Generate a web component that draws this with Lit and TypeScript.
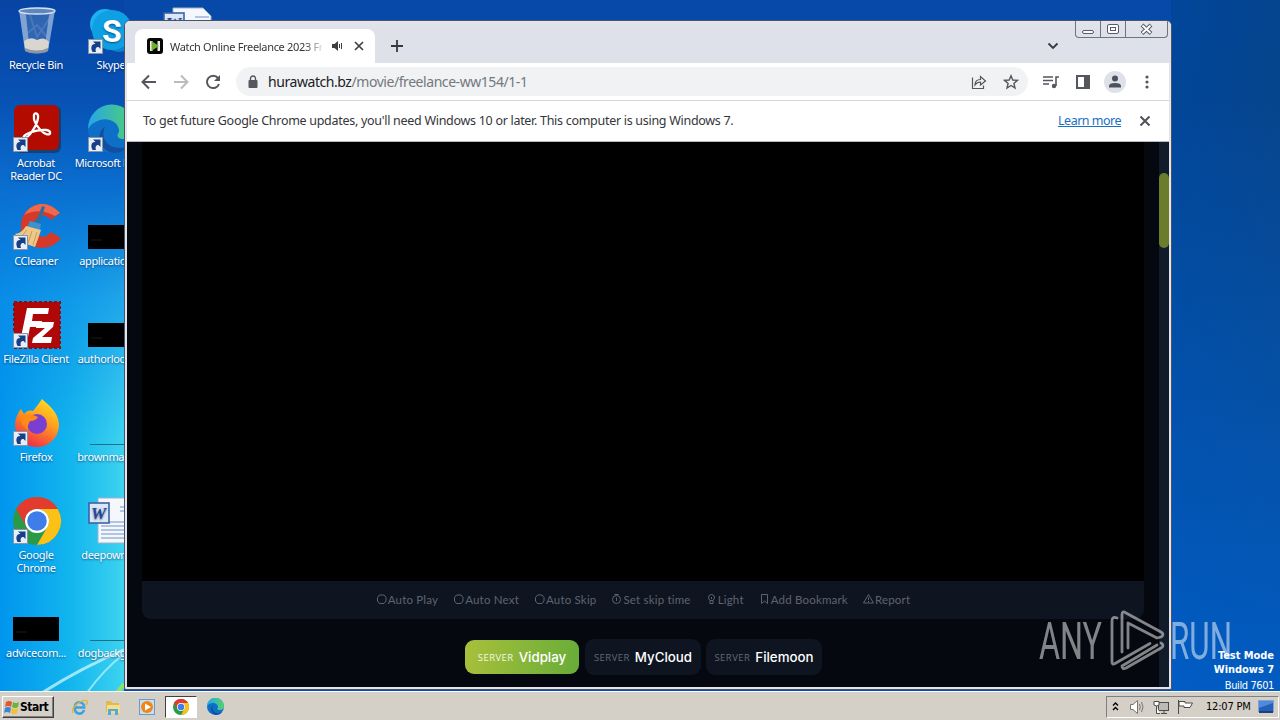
import { LitElement, css, html, svg } from 'lit'
import { customElement, property } from 'lit/decorators.js'
import { classMap } from 'lit/directives/class-map.js'

const glyphs: Record<string, unknown> = {
  bin: svg`
    <path d="M6 3 L42 3 L35 44 Q24 50 12 44Z" fill="#3f6fb4" opacity=".75"/>
    <path d="M6 3 L13 8 L17 46 L12 44Z" fill="#b9cfe8" opacity=".6"/>
    <path d="M42 3 L36 8 L31 46 L35 44Z" fill="#90b0dc" opacity=".8"/>
    <path d="M17 8 L24 30 L36 12 M15 26 L24 18 L34 30" stroke="#a9c4e8" stroke-width="2" fill="none" opacity=".2"/>
    <path d="M11 34 Q18 29 24 33 Q31 29 36 35 L35 42 Q24 48 12 42Z" fill="#d9d5cf"/>
    <path d="M12 41 Q24 46 35 41 L35 44 Q24 49 12 44Z" fill="#8e96a2"/>
    <ellipse cx="24" cy="4" rx="18" ry="3" fill="#5f87bd" stroke="#d5e2f1" stroke-width="1.3"/>`,
  skype: svg`
    <circle cx="17" cy="17" r="15" fill="#1bb2ee"/>
    <circle cx="31" cy="30" r="15" fill="#0a83cf"/>
    <circle cx="24" cy="23" r="20" fill="#0fa0e3"/>
    <text x="14" y="35" font-family="Roboto" font-weight="700" font-size="32" fill="#fff">S</text>`,
  acrobat: svg`
    <rect x="2" y="1" width="46" height="47" rx="6" fill="#222" opacity=".5"/>
    <rect x="1" y="0" width="45" height="45" rx="6" fill="#b30b00"/>
    <path d="M21 12 C20 7 26 7 25 13 C24 21 15 34 11 33 C8 30 23 24 33 25 C39 26 38 31 33 29 C28 27 20 17 21 12Z" fill="none" stroke="#fff" stroke-width="2.3"/>`,
  edge: svg`
    <defs><linearGradient id="e1" x1="0" x2="1"><stop offset="0" stop-color="#26a5e8"/><stop offset="1" stop-color="#53d36c"/></linearGradient></defs>
    <circle cx="24" cy="24" r="24" fill="#0d6fc8"/>
    <path d="M0 24 A24 24 0 0 1 48 23 C48 31 42 34 35 34 C28 34 29 29 31 27 C32 18 21 12 12 15 C6 17 2 20 0 24Z" fill="url(#e1)"/>
    <path d="M17 22 C12 32 19 43 32 43 Q38 43 43 39 Q37 48 25 48 C10 45 8 26 17 22Z" fill="#124f9e"/>`,
  ccleaner: svg`
    <path d="M47 10 Q38 0 27 1 A22 22 0 0 0 8 20 L8 30 A22 22 0 0 0 30 45 Q42 44 48 35 L38 29 Q33 35 27 33 Q21 30 21 23 Q21 15 28 13 Q34 12 38 17Z" fill="#d5392a"/>
    <path d="M47 10 Q38 0 27 1 Q16 3 11 12 Q26 4 42 13Z" fill="#ee6a4e"/>
    <path d="M29 3 L32 4 L27 20 L23 19Z" fill="#2d6f9e"/>
    <path d="M17 18 L28 21 L27 27 L14 24Z" fill="#3c93cc"/>
    <path d="M13 23 L28 27 Q25 36 22 44 Q12 42 2 31 Q9 30 13 23Z" fill="#efc888"/>
    <path d="M14 27 L8 34 M19 28 L15 40 M24 29 L20 42" stroke="#c99a55" stroke-width="1"/>`,
  filezilla: svg`
    <rect x="1" y="1" width="46" height="46" fill="#b00808" stroke="#8d1010" stroke-width="2" stroke-dasharray="3 2"/>
    <path d="M14 7 H36 L35 13 H20 L19 20 H29 L28 26 H17 L14 41 H7Z M24 21 H41 L40 26 L29 36 H39 L38 42 H19 L20 37 L32 27 H23Z" fill="#fff"/>`,
  firefox: svg`
    <defs><linearGradient id="f1" x1=".8" y1="0" x2=".3" y2="1"><stop offset="0" stop-color="#ffe226"/><stop offset=".45" stop-color="#ff9a1f"/><stop offset="1" stop-color="#f0274c"/></linearGradient></defs>
    <path d="M29 0 C35 6 45 12 46 25 A22 22 0 0 1 2 27 C2 19 5 14 8 10 L11 15 Q15 10 20 12 Q25 6 29 0Z" fill="url(#f1)"/>
    <circle cx="24" cy="25" r="10" fill="#7a3fd0"/>
    <path d="M7 18 Q17 13 25 18 Q23 22 17 22 Q14 27 15 31 Q8 27 7 18Z" fill="#ff8a16"/>`,
  chrome: svg`
    <circle cx="24" cy="24" r="24" fill="#2b9a48"/>
    <path d="M3.2 12 A24 24 0 0 1 44.8 12 H24 A12 12 0 0 0 13.6 30Z" fill="#e33b2e"/>
    <path d="M44.8 12 A24 24 0 0 1 24 48 L34.4 30 A12 12 0 0 0 24 12Z" fill="#fbc116"/>
    <circle cx="24" cy="24" r="12" fill="#fff"/>
    <circle cx="24" cy="24" r="9.8" fill="#3f7de8"/>`,
  black: svg`
    <rect x="0" y="22" width="46" height="24" fill="#000"/><path d="M3 37 H14" stroke="#1a1a1a"/>`,
  line: svg`<path d="M2 45.5 H48" stroke="#1c6f86" stroke-width="1.2"/>`,
  word: svg`
    <path d="M10 1 H40 L48 9 V46 H10Z" fill="#f4f7fc" stroke="#9db1cc"/>
    <path d="M32 10 H46 M32 14 H46 M13 25 H46 M13 29 H46 M13 33 H46 M13 37 H46 M13 41 H46" stroke="#6f92c9" stroke-width="1"/>
    <rect x="1" y="6" width="20" height="20" fill="#dbe6f6" stroke="#3c62a5" stroke-width="1.6"/>
    <text x="3" y="22" font-family="Liberation Serif" font-style="italic" font-weight="700" font-size="17" fill="#254a93">W</text>`,
}

interface Shortcut {
  icon: string
  label: string
  arrow?: boolean
}

const shortcuts: Shortcut[] = [
  { icon: 'bin', label: 'Recycle Bin' },
  { icon: 'acrobat', label: 'Acrobat Reader DC', arrow: true },
  { icon: 'ccleaner', label: 'CCleaner', arrow: true },
  { icon: 'filezilla', label: 'FileZilla Client', arrow: true },
  { icon: 'firefox', label: 'Firefox', arrow: true },
  { icon: 'chrome', label: 'Google Chrome', arrow: true },
  { icon: 'black', label: 'advicecom...' },
  { icon: 'skype', label: 'Skype', arrow: true },
  { icon: 'edge', label: 'Microsoft Edge', arrow: true },
  { icon: 'black', label: 'applicationr...' },
  { icon: 'black', label: 'authorlocati...' },
  { icon: 'line', label: 'brownmagn...' },
  { icon: 'word', label: 'deepown.rtf' },
  { icon: 'line', label: 'dogbackgro...' },
  { icon: 'word', label: '' },
]

@customElement('desktop-icon')
export class DesktopIcon extends LitElement {
  @property() icon = ''
  @property() label = ''
  @property({ type: Boolean }) arrow = false

  static styles = css`
    :host {
      display: flex;
      flex-direction: column;
      align-items: center;
      width: 74px;
      height: 98px;
      color: #fff;
      font: 11px/13px 'Noto Sans', sans-serif;
      letter-spacing: -0.34px;
      text-align: center;
      text-shadow: 0 1px 2px rgba(0, 20, 70, 0.6);
    }
    .icon {
      width: 48px;
      height: 48px;
      margin: 0 0 3px 2px;
      overflow: visible;
    }
    .label {
      width: 66px;
      white-space: normal;
    }
    .wide {
      white-space: nowrap;
      width: auto;
    }
  `

  render() {
    const wide = !this.label.startsWith('Acrobat') && !this.label.startsWith('Google')
    return html`
      <svg class="icon" viewBox="0 0 48 48">
        ${glyphs[this.icon]}
        ${this.arrow
          ? svg`
            <rect x="0.5" y="32.5" width="14" height="14" fill="#e8eef6" stroke="#8795a8"/>
            <path d="M4.500 45 C2 40 4 36.500 7.500 37 L5 34.500 H12.500 V42 L10.500 40 C8 39.500 7 42 8 45Z" fill="#173f87"/>`
          : ''}
      </svg>
      <div class=${classMap({ label: true, wide })}>${this.label}</div>
    `
  }
}

@customElement('chrome-window')
export class ChromeWindow extends LitElement {
  static styles = css`
    :host {
      display: flex;
      flex-direction: column;
      box-sizing: border-box;
      border: 1px solid #44566e;
      border-radius: 6px 6px 2px 2px;
      background: #e4e4ea;
      padding: 0 2px 2px;
      overflow: hidden;
      font-family: 'Noto Sans', sans-serif;
      color: #35363a;
    }
    svg {
      display: block;
      flex: none;
    }
    .strip {
      display: flex;
      height: 42px;
      background: linear-gradient(#e5e3ea, #dee1e9 8px);
      margin: 0 -2px;
      padding-left: 10px;
    }
    .tab {
      display: flex;
      align-items: center;
      box-sizing: border-box;
      width: 240px;
      height: 34px;
      margin-top: 8px;
      padding: 0 11px 0 12px;
      background: #fff;
      border-radius: 8px 8px 0 0;
      font-size: 11px;
    }
    .tab-title {
      width: 153px;
      margin: 0 8px 0 7px;
      overflow: hidden;
      white-space: nowrap;
      letter-spacing: -0.33px;
      mask-image: linear-gradient(90deg, #000 135px, transparent 155px);
    }
    .close {
      margin-left: 10px;
    }
    .plus {
      margin: 18px 0 0 15px;
    }
    .spacer {
      flex: 1;
    }
    .chevron {
      margin: 20px 16px 0 0;
    }
    .buttons {
      display: flex;
      height: 16px;
      margin-right: 3px;
      border: 1px solid #6d7480;
      border-top: 0;
      border-radius: 0 0 4px 4px;
    }
    .toolbar {
      display: flex;
      align-items: center;
      height: 37px;
      background: #fff;
      border-bottom: 1px solid #d5d7da;
      padding: 0 13px 0 14px;
    }
    .nav {
      margin-right: 16px;
    }
    .omnibox {
      display: flex;
      align-items: center;
      box-sizing: border-box;
      width: 792px;
      height: 29px;
      margin: 0 15px 0 -1px;
      padding: 0 9px 0 11px;
      border-radius: 15px;
      background: #f0f2f4;
      font-size: 14px;
    }
    .url {
      flex: 1;
      margin-left: 9px;
      color: #74787d;
      white-space: nowrap;
      letter-spacing: -0.44px;
    }
    .host {
      color: #202124;
    }
    .share {
      margin-right: 16px;
    }
    .tools {
      display: flex;
      align-items: center;
      gap: 16px;
    }
    .avatar {
      margin: 0 -4px;
    }
    .infobar {
      display: flex;
      align-items: center;
      box-sizing: border-box;
      height: 41px;
      padding: 0 18px 1px 16px;
      background: #fff;
      border-bottom: 1px solid #b8babd;
      font-size: 12.5px;
      letter-spacing: -0.29px;
      white-space: nowrap;
    }
    .learn {
      margin-left: auto;
      margin-right: 18px;
      color: #1a6fc4;
      letter-spacing: -0.5px;
      text-decoration: underline;
    }
    .page {
      display: flex;
      flex: 1;
      min-height: 0;
      background: #05080f;
    }
    .main {
      flex: 1;
      padding: 0 15px;
    }
    .video {
      height: 439px;
      background: #000;
    }
    .controls {
      display: flex;
      justify-content: center;
      align-items: center;
      gap: 15px;
      box-sizing: border-box;
      height: 38px;
      padding-bottom: 2px;
      background: #0e1521;
      border-radius: 0 0 9px 9px;
      color: #5e646e;
      font: 11.5px Lato, sans-serif;
      letter-spacing: 0.19px;
    }
    .control {
      display: flex;
      align-items: center;
      gap: 1px;
      white-space: nowrap;
    }
    .servers {
      display: flex;
      justify-content: center;
      align-items: center;
      gap: 5px;
      margin-top: 20px;
      padding-left: 1px;
    }
    .server {
      display: flex;
      align-items: center;
      justify-content: center;
      gap: 5px;
      width: 116px;
      height: 36px;
      border-radius: 9px;
      background: #0e1521;
      color: #fff;
      font: 500 13.3px Inter, sans-serif;
    }
    .server small {
      font: 9.5px 'Open Sans', sans-serif;
      letter-spacing: 0.45px;
      color: #636973;
    }
    .active {
      width: 114px;
      height: 34px;
      margin-right: 1px;
      background: linear-gradient(100deg, #a9c03b, #67ac38);
    }
    .active small {
      color: #f2f6e4;
    }
    .track {
      width: 10px;
      background: #111b29;
    }
    .thumb {
      height: 75px;
      margin-top: 31px;
      border-radius: 5px;
      background: #6b7d2a;
    }
  `

  ring = svg`<path d="M3.5 2 H8 L10 4.500 V8 L8 10.500 H3.5 L1.5 8 V4.500Z"/>`

  controls = [
    { text: 'Auto Play', icon: this.ring },
    { text: 'Auto Next', icon: this.ring },
    { text: 'Auto Skip', icon: this.ring },
    { text: 'Set skip time', icon: svg`<circle cx="5.5" cy="6.5" r="4"/><path d="M3.5 1.500 H7.5 M5.5 4.5 V8"/>` },
    { text: 'Light', icon: svg`<path d="M4 7.5 Q2.500 6 2.500 4 Q3 1.500 5.5 1.500 Q8 1.500 8.500 4 Q8.500 6 7 7.500 V10.500 H4Z M4 7.500 H7 M5.500 4 V6"/>` },
    { text: 'Add Bookmark', icon: svg`<path d="M2.500 1.500 H8.500 V10.500 L5.500 8 L2.500 10.500Z"/>` },
    { text: 'Report', icon: svg`<path d="M5.500 1.500 L10.500 10 H.5Z M5.500 4.500 V7 M5.500 8 V9"/>` },
  ]

  servers = ['Vidplay', 'MyCloud', 'Filemoon']

  renderStrip() {
    return html`
      <div class="strip">
        <div class="tab">
          <svg width="16" height="16">
            <rect width="16" height="16" rx="3" fill="#050805"/>
            <path d="M3 3 H5.500 V13 H3Z M10.500 3 H13 V13 H10.500Z" fill="#e9efe4"/>
            <path d="M4.500 3 L12 8 L4.500 13Z" fill="#72ad31"/>
          </svg>
          <div class="tab-title">Watch Online Freelance 2023 Free</div>
          <svg width="14" height="12" fill="#3c4043">
            <path d="M2 4 H4.500 L8 1 V11 L4.500 8 H2Z"/>
            <path d="M9.500 4 V8 M11.500 3 V9" stroke="#3c4043"/>
          </svg>
          <svg class="close" width="10" height="10" stroke="#3c4043" stroke-width="1.700"><path d="M1 1 L9 9 M9 1 L1 9"/></svg>
        </div>
        <svg class="plus" width="14" height="14" stroke="#35383c" stroke-width="1.800"><path d="M7 1 V13 M1 7 H13"/></svg>
        <div class="spacer"></div>
        <svg class="chevron" width="12" height="10" fill="none" stroke="#35383c" stroke-width="1.800"><path d="M1.500 2.500 L6 7 L10.500 2.500"/></svg>
        <div class="buttons">
          <svg width="91" height="16" fill="none" stroke="#555c68">
            <path d="M24.500 0 V16 M49.500 0 V16" stroke="#6d7480"/>
            <rect x="6.500" y="9.500" width="11" height="3" rx="1.500" fill="#fff"/>
            <rect x="31.500" y="3.500" width="11" height="9" rx="1.500" fill="#fff"/>
            <rect x="34.500" y="6.500" width="5" height="3"/>
            <path d="M66 4 L75 12.500 M75 4 L66 12.500" stroke-width="4"/>
            <path d="M66.500 4.500 L74.500 12 M74.500 4.500 L66.500 12" stroke="#fff" stroke-width="2"/>
          </svg>
        </div>
      </div>
    `
  }

  renderToolbar() {
    return html`
      <div class="toolbar">
        <svg class="nav" width="16" height="16" fill="none" stroke="#54575c" stroke-width="2"><path d="M15 8 H2 M8 1.500 L1.500 8 L8 14.500"/></svg>
        <svg class="nav" width="16" height="16" fill="none" stroke="#b9bbbe" stroke-width="2"><path d="M1 8 H14 M8 1.500 L14.500 8 L8 14.500"/></svg>
        <svg class="nav" width="16" height="16" fill="none" stroke="#54575c" stroke-width="2">
          <path d="M13 4 A6.200 6.200 0 1 0 14 10"/><path d="M15 1 V7 H9Z" fill="#54575c" stroke="none"/>
        </svg>
        <div class="omnibox">
          <svg width="12" height="14"><rect x="1.500" y="5" width="9" height="8" rx="1" fill="#54575c"/><path d="M3.500 5 V3.500 A2.500 2.500 0 0 1 8.500 3.500 V5" fill="none" stroke="#54575c" stroke-width="1.400"/></svg>
          <div class="url"><span class="host">hurawatch.bz</span>/movie/freelance-ww154/1-1</div>
          <svg class="share" width="16" height="16" fill="none" stroke="#54575c" stroke-width="1.200">
            <path d="M1.500 3.500 V14.500 H12.500 V11.500"/><path d="M4 11 Q4 5.500 9.500 5.500 V2.500 L14.500 7 L9.500 11 V8 Q6 8 4 11Z"/>
          </svg>
          <svg width="16" height="16" fill="none" stroke="#54575c" stroke-width="1.400"><path d="M8 1.800 L9.800 6 L14.400 6.400 L10.900 9.400 L12 14 L8 11.500 L4 14 L5.100 9.400 L1.600 6.400 L6.200 6Z"/></svg>
        </div>
        <div class="tools">
          <svg width="16" height="14" fill="none" stroke="#54575c" stroke-width="1.600">
            <path d="M0 2 H10 M0 5.500 H10 M0 9 H6 M13 11 V2 H16"/><circle cx="11" cy="11" r="2.200" fill="#54575c" stroke="none"/>
          </svg>
          <svg width="16" height="14"><rect x="2" y="1" width="12" height="12" fill="none" stroke="#54575c" stroke-width="2"/><rect x="9" y="1" width="5" height="12" fill="#54575c"/></svg>
          <svg class="avatar" width="24" height="24" fill="#4a5261">
            <circle cx="12" cy="12" r="11" fill="#dee1e8"/><circle cx="12" cy="8.500" r="3"/><path d="M6 17.500 V16 Q6 13 12 13 Q18 13 18 16 V17.500Z"/>
          </svg>
          <svg width="16" height="16" fill="#54575c"><circle cx="8" cy="3" r="1.600"/><circle cx="8" cy="8" r="1.600"/><circle cx="8" cy="13" r="1.600"/></svg>
        </div>
      </div>
    `
  }

  render() {
    return html`
      ${this.renderStrip()}
      ${this.renderToolbar()}
      <div class="infobar">
        <span>To get future Google Chrome updates, you'll need Windows 10 or later. This computer is using Windows 7.</span>
        <span class="learn">Learn more</span>
        <svg width="12" height="12" stroke="#505357" stroke-width="2"><path d="M1.500 1.500 L10.500 10.500 M10.500 1.500 L1.500 10.500"/></svg>
      </div>
      <div class="page">
        <div class="main">
          <div class="video"></div>
          <div class="controls">
            ${this.controls.map(
              (c) => html`
                <div class="control">
                  <svg width="11" height="12" fill="none" stroke="#5e646e">${c.icon}</svg>
                  <span>${c.text}</span>
                </div>
              `
            )}
          </div>
          <div class="servers">
            ${this.servers.map(
              (name, i) => html`
                <div class=${classMap({ server: true, active: i === 0 })}><small>SERVER</small>${name}</div>
              `
            )}
          </div>
        </div>
        <div class="track"><div class="thumb"></div></div>
      </div>
    `
  }
}

@customElement('task-bar')
export class TaskBar extends LitElement {
  static styles = css`
    :host {
      display: flex;
      align-items: center;
      box-sizing: border-box;
      background: #d4d0c8;
      border-top: 1px solid #fff;
      padding: 1px 1px 0 2px;
      font: 11px 'DejaVu Sans Condensed', 'DejaVu Sans', sans-serif;
      color: #000;
    }
    svg {
      display: block;
      flex: none;
    }
    .start {
      display: flex;
      align-items: center;
      box-sizing: border-box;
      width: 52px;
      height: 22px;
      padding-left: 1px;
      border: 1px solid;
      border-color: #fff #404040 #404040 #fff;
      box-shadow: inset -1px -1px #808080;
      font-size: 12px;
      font-weight: 700;
      letter-spacing: -0.5px;
    }
    .apps {
      display: flex;
      align-items: center;
      margin-left: 9px;
      gap: 2px;
    }
    .app {
      display: flex;
      align-items: center;
      justify-content: center;
      box-sizing: border-box;
      width: 32px;
      height: 22px;
    }
    .pressed {
      background: #fff;
      border: 1px solid;
      border-color: #404040 #fff #fff #404040;
    }
    .tray {
      display: flex;
      align-items: center;
      gap: 7px;
      box-sizing: border-box;
      width: 173px;
      height: 22px;
      margin-left: auto;
      padding: 0 1px 0 5px;
      border: 1px solid;
      border-color: #808080 #fff #fff #808080;
    }
    .sound {
      margin-left: 2px;
    }
    .time {
      margin: 0 0 0 5px;
      white-space: nowrap;
      letter-spacing: -0.2px;
    }
  `

  render() {
    return html`
      <div class="start">
        <svg width="16" height="16">
          <path d="M2 3 Q5 1 8 3 L7 8 Q4 6 1 8Z" fill="#e4572a"/><path d="M9 3 Q12 5 15 3 L14 8 Q11 10 8 8Z" fill="#6db33f"/>
          <path d="M1 9 Q4 7 7 9 L6 14 Q3 12 0 14Z" fill="#3b85d6"/><path d="M8 9 Q11 11 14 9 L13 14 Q10 16 7 14Z" fill="#f6c02c"/>
        </svg>
        Start
      </div>
      <div class="apps">
        <div class="app">
          <svg width="17" height="16" fill="none"><path d="M14.500 8.500 H4 A4.500 4.500 0 0 1 13 7 M4 9 A4.500 4.500 0 0 0 13 11" stroke="#3ba3e0" stroke-width="2.600"/><path d="M2 14 Q0 10 6 5 Q13 0 16 2 Q17 3 15 6" stroke="#e2b437" stroke-width="1.400"/></svg>
        </div>
        <div class="app">
          <svg width="16" height="16"><path d="M1 2 H6 L7 4 H14 V13 H1Z" fill="#e3b84c"/><path d="M2 6 H15 V14 H2Z" fill="#f5dd8c"/><path d="M3 16 V10 H13 V16 H10 V12 H6 V16Z" fill="#56aad6"/></svg>
        </div>
        <div class="app">
          <svg width="16" height="16"><rect x=".5" y=".5" width="15" height="15" fill="#c9dff1" stroke="#6a9cc8"/><circle cx="8" cy="8" r="6" fill="#f08519"/><path d="M6 4.500 L12 8 L6 11.500Z" fill="#fff"/></svg>
        </div>
        <div class="app pressed"><svg width="16" height="16" viewBox="0 0 48 48">${glyphs.chrome}</svg></div>
        <div class="app"><svg width="17" height="17" viewBox="0 0 48 48">${glyphs.edge}</svg></div>
      </div>
      <div class="tray">
        <svg width="8" height="11" fill="none" stroke="#000" stroke-width="1.400"><path d="M1 4.500 L3.500 2 L6 4.500 M1 9 L3.500 6.500 L6 9"/></svg>
        <svg class="sound" width="17" height="16" fill="none" stroke="#77756f"><path d="M1.500 5.500 H4 L8.500 1.500 V14.500 L4 10.500 H1.500Z" fill="#fff"/><path d="M10.500 5 Q12 8 10.500 11 M12.500 3 Q15.500 8 12.500 13"/></svg>
        <svg width="17" height="16" fill="none" stroke="#4c4b48"><rect x="5.500" y="3.500" width="10" height="8" fill="#bcbab4"/><path d="M8 14.500 H14 M11 12 V14"/><path d="M1 2.500 H6 V6 Q3.500 8 1 6Z M3.500 7 V14.500 H7" fill="#fff"/></svg>
        <svg width="17" height="16" fill="#fff" stroke="#4c4b48"><path d="M1.500 1 V15"/><path d="M2 2.500 H8 V4 H15.500 L13 8.500 H7 V7 H2Z"/></svg>
        <span class="time">12:07 PM</span>
        <svg width="16" height="14"><rect x=".5" y=".5" width="15" height="11" fill="#2560b6" stroke="#7fa3d2"/><path d="M1 8 L15 3 V1 H1Z" fill="#4f8ade"/><rect x="1" y="11" width="14" height="2" fill="#1c3f80"/></svg>
      </div>
    `
  }
}

@customElement('app-root')
export class AppRoot extends LitElement {
  static styles = css`
    :host {
      display: block;
      position: relative;
      width: 1280px;
      height: 720px;
      overflow: hidden;
      background:
        linear-gradient(180deg, transparent 100px, rgba(0, 96, 205, 0.85) 690px) 1171px 0 / 109px 100% no-repeat,
        linear-gradient(100deg, #00469a, #0c4482) 1171px 0 / 109px 100% no-repeat,
        linear-gradient(180deg, #0744a4 0, #0752b4 100px, #0a6fd0 190px, rgba(13, 135, 229, 0.6) 300px, rgba(0, 160, 240, 0) 440px) 0 0 / 124px 100% no-repeat,
        linear-gradient(90deg, #0095ee 0, #12b5ee 70px, #3dd3f0 124px) 0 0 / 124px 100% no-repeat,
        #0649a8;
    }
    .rays {
      position: absolute;
      left: 0;
      top: 560px;
    }
    .icons {
      display: grid;
      grid-auto-flow: column;
      grid-template-rows: repeat(7, 98px);
      grid-auto-columns: 75px;
      padding-top: 7px;
      margin-left: -1px;
      position: relative;
    }
    .window {
      position: absolute;
      left: 124px;
      top: 20px;
      width: 1048px;
      height: 670px;
    }
    .taskbar {
      position: absolute;
      left: 0;
      right: 0;
      bottom: 0;
      height: 29px;
    }
    .mode {
      position: absolute;
      right: 6px;
      top: 649px;
      color: #fff;
      font: 700 11px/14px 'DejaVu Sans Condensed', 'DejaVu Sans', sans-serif;
      letter-spacing: -0.05px;
      text-align: right;
    }
    .build {
      display: block;
      margin-top: 2px;
      font-weight: 400;
      letter-spacing: -0.4px;
    }
    .brand {
      position: absolute;
      left: 1036px;
      top: 606px;
      opacity: 0.5;
    }
  `

  render() {
    return html`
      <svg class="rays" width="124" height="134" fill="none" stroke="#d8fbff">
        <path d="M40 134 Q85 106 124 90" stroke-width="3" opacity=".7"/>
        <path d="M86 134 Q105 108 124 94" stroke-width="2" opacity=".6"/>
        <path d="M116 134 L124 124" stroke="#8be36a" stroke-width="4"/>
      </svg>
      <div class="icons">
        ${shortcuts.map(
          (s) => html`<desktop-icon .icon=${s.icon} .label=${s.label} .arrow=${!!s.arrow}></desktop-icon>`
        )}
      </div>
      <chrome-window class="window"></chrome-window>
      <svg class="brand" width="200" height="70" fill="#fff">
        <text x="3" y="53" font-family="Roboto" font-weight="400" font-size="52" textLength="63" lengthAdjust="spacingAndGlyphs">ANY</text>
        <text x="134" y="53" font-family="Roboto" font-weight="400" font-size="52" textLength="62" lengthAdjust="spacingAndGlyphs">RUN</text>
        <g fill="none" stroke="#fff" stroke-width="2.800" stroke-linejoin="round" stroke-linecap="round">
          <path d="M81 12 Q76 10 76 15 V56 Q76 59 79 57.500 L114 37.500"/>
          <path d="M86 46 V9 Q86 4 90 7 L125 26 Q129 28.500 125 31 L121 32 L92 17 V42"/>
          <path d="M125 37 Q129 39.500 125 42 L90 62 Q86 64 86 60 L121 39"/>
        </g>
      </svg>
      <div class="mode">Test Mode<br />Windows 7<span class="build">Build 7601</span></div>
      <task-bar class="taskbar"></task-bar>
    `
  }
}
